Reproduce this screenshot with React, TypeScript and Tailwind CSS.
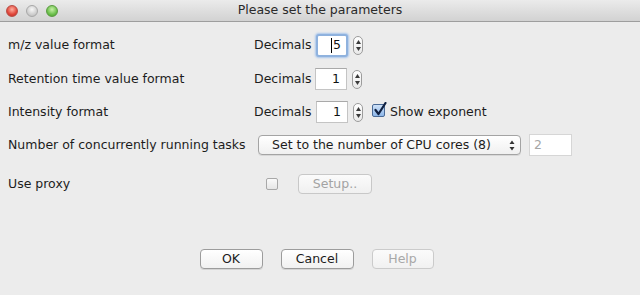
import React from "react";

const font = { fontFamily: '"Lucida Grande", "DejaVu Sans", "Noto Sans", sans-serif' };

function Spinner() {
  return (
    <div className="ml-[5px] flex h-[19px] w-[10px] flex-col items-center justify-center gap-[3px] rounded-[5px] border border-[#9c9c9c] bg-gradient-to-b from-[#ffffff] to-[#e9e9e9]">
      <svg width="5" height="4" viewBox="0 0 5 4"><path d="M2.5 0 L5 4 L0 4 Z" fill="#3a3a3a" /></svg>
      <svg width="5" height="4" viewBox="0 0 5 4"><path d="M0 0 L5 0 L2.5 4 Z" fill="#3a3a3a" /></svg>
    </div>
  );
}

function NumField({ value, focused }: { value: string; focused?: boolean }) {
  if (focused) {
    return (
      <div className="flex h-[23px] w-[32px] items-center justify-end rounded-[3px] border-[2px] border-[#8fb2de] bg-white pr-[5px] shadow-[0_0_2px_1px_#a9c6ec]">
        <span className="mr-[1px] h-[15px] w-[1px] bg-black" />
        <span className="leading-none text-[#111]">{value}</span>
      </div>
    );
  }
  return (
    <div className="flex h-[22px] w-[32px] items-center justify-end border border-[#c4c4c4] border-t-[#a9a9a9] bg-white pr-[6px]">
      <span className="leading-none text-[#111]">{value}</span>
    </div>
  );
}

export default function App() {
  return (
    <div className="h-[295px] w-[640px] overflow-hidden bg-[#ececec] text-[12.5px] text-[#1c1c1c]" style={font}>
      {/* title bar */}
      <div className="relative flex h-[22px] items-center justify-center border-b border-[#9e9e9e] bg-gradient-to-b from-[#ebebeb] to-[#d2d2d2]">
        <div className="absolute left-[6px] top-[5px] flex gap-[8px]">
          <span className="h-[12px] w-[12px] rounded-full border border-[#b84c44] bg-[radial-gradient(circle_at_50%_35%,#ffb0a0,#e0463a_60%,#b8302a)]" />
          <span className="h-[12px] w-[12px] rounded-full border border-[#a8a8a8] bg-[radial-gradient(circle_at_50%_35%,#f8f8f8,#cfcfcf_60%,#b5b5b5)]" />
          <span className="h-[12px] w-[12px] rounded-full border border-[#5a9a40] bg-[radial-gradient(circle_at_50%_35%,#c8f0a8,#6cc04c_60%,#4a9a30)]" />
        </div>
        <span className="text-[#2a2a2a]">Please set the parameters</span>
      </div>

      <div className="pl-[8px] pt-[6px]">
        {/* row 1 */}
        <div className="flex h-[34px] items-center">
          <div className="w-[246px]">m/z value format</div>
          <span className="w-[60px]">Decimals</span>
          <div className="ml-[2px]"><NumField value="5" focused /></div>
          <Spinner />
        </div>
        {/* row 2 */}
        <div className="flex h-[34px] items-center">
          <div className="w-[246px]">Retention time value format</div>
          <span className="w-[60px]">Decimals</span>
          <div className="ml-[1px]"><NumField value="1" /></div>
          <Spinner />
        </div>
        {/* row 3 */}
        <div className="flex h-[32px] items-center">
          <div className="w-[246px]">Intensity format</div>
          <span className="w-[60px]">Decimals</span>
          <div className="ml-[2px]"><NumField value="1" /></div>
          <Spinner />
          <div className="relative mb-[4px] ml-[9px] h-[13px] w-[13px] rounded-[2px] border border-[#4a6a96] bg-gradient-to-b from-[#cfe2f8] to-[#8db6e8]">
            <svg className="absolute left-[0px] top-[-3px]" width="14" height="15" viewBox="0 0 14 15">
              <path d="M2.5 8 L5.5 12 L12.5 1" fill="none" stroke="#102040" strokeWidth="2.2" strokeLinecap="round" strokeLinejoin="round" />
            </svg>
          </div>
          <span className="ml-[5px]">Show exponent</span>
        </div>
        {/* row 4 */}
        <div className="flex h-[34px] items-center">
          <div className="w-[250px]">Number of concurrently running tasks</div>
          <div className="flex h-[20px] w-[263px] items-center justify-between rounded-[4px] border border-[#a4a4a4] bg-gradient-to-b from-[#ffffff] to-[#f0f0f0] pl-[13px] pr-[5px] shadow-[0_1px_0_#d8d8d8]">
            <span>Set to the number of CPU cores (8)</span>
            <svg width="6" height="11" viewBox="0 0 6 11">
              <path d="M3 0.5 L5.5 4 L0.5 4 Z" fill="#333" />
              <path d="M0.5 7 L5.5 7 L3 10.5 Z" fill="#333" />
            </svg>
          </div>
          <div className="ml-[8px] flex h-[22px] w-[43px] items-center border border-[#d6d6d6] bg-white pl-[4px] text-[#a6a6a6]">2</div>
        </div>
        {/* row 5 */}
        <div className="flex h-[44px] items-center">
          <div className="w-[258px]">Use proxy</div>
          <div className="h-[12px] w-[12px] rounded-[2px] border border-[#a8a8a8] bg-gradient-to-b from-[#fafafa] to-[#e6e6e6]" />
          <div className="ml-[20px] flex h-[20px] w-[74px] items-center justify-center rounded-[4px] border border-[#c8c8c8] bg-gradient-to-b from-[#fbfbfb] to-[#f0f0f0] text-[#a3a3a3]">Setup..</div>
        </div>
      </div>

      {/* bottom buttons */}
      <div className="mt-[43px] flex justify-center gap-[18px] pr-[7px]">
        <div className="flex h-[20px] w-[63px] items-center justify-center rounded-[4px] border border-[#9c9c9c] bg-gradient-to-b from-[#ffffff] to-[#f1f1f1] shadow-[0_1px_0_#d4d4d4]">OK</div>
        <div className="flex h-[20px] w-[73px] items-center justify-center rounded-[4px] border border-[#9c9c9c] bg-gradient-to-b from-[#ffffff] to-[#f1f1f1] shadow-[0_1px_0_#d4d4d4]">Cancel</div>
        <div className="flex h-[20px] w-[62px] items-center justify-center rounded-[4px] border border-[#cbcbcb] bg-gradient-to-b from-[#fbfbfb] to-[#f1f1f1] text-[#a8a8a8]">Help</div>
      </div>
    </div>
  );
}
